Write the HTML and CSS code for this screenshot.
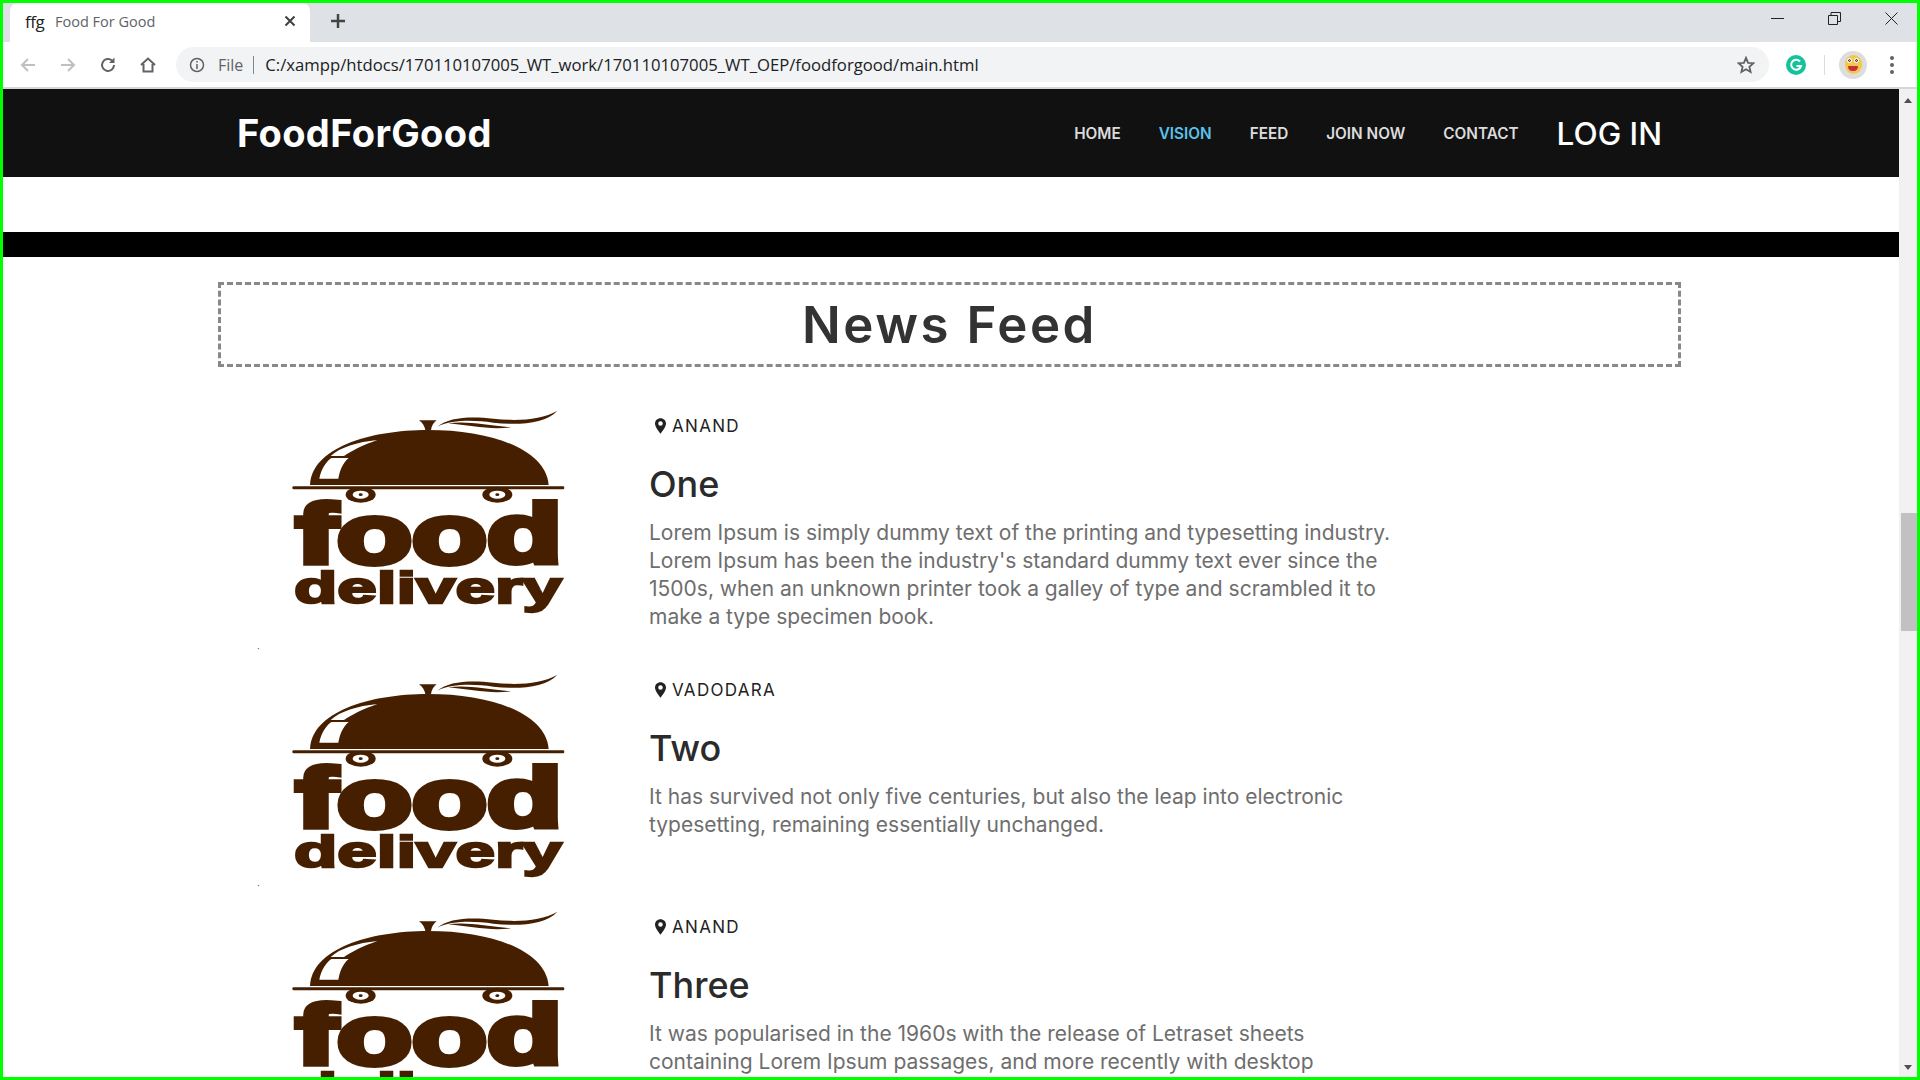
FILE: index.html
```html
<!DOCTYPE html>
<html lang="en">
<head>
<meta charset="utf-8">
<title>Food For Good</title>
<link rel="stylesheet" href="styles.css">
</head>
<body>
<svg class="defs" width="0" height="0" aria-hidden="true">
  <symbol id="cloche" viewBox="0 0 1080 678">
    <path class="ink" d="M210 285C214 175 385 120 565 120C755 120 917 178 926 285Z"/>
    <path class="paper" d="M238 266C243 238 258 215 274 204L326 204C307 220 299 244 295 266Z"/>
    <path class="paper" d="M272 198C300 172 352 156 412 150C370 165 335 182 312 198Z"/>
    <path class="ink" d="M537 91L590 91C580 99 575 108 573 120L556 120C553 108 548 99 537 91Z"/>
    <rect class="ink" x="157" y="289" width="816" height="9" rx="4"/>
    <path class="ink" d="M592 110C625 82 690 78 760 86C830 94 905 90 952 62C915 102 835 106 760 98C700 90 640 88 592 110Z"/>
    <path class="ink" d="M625 100C680 92 740 106 812 112C750 120 690 106 625 100Z"/>
    <ellipse class="ink" cx="362" cy="314" rx="45" ry="24"/>
    <ellipse class="paper" cx="362" cy="314" rx="24" ry="12"/>
    <ellipse class="ink" cx="362" cy="314" rx="6" ry="4"/>
    <ellipse class="ink" cx="772" cy="314" rx="45" ry="24"/>
    <ellipse class="paper" cx="772" cy="314" rx="24" ry="12"/>
    <ellipse class="ink" cx="772" cy="314" rx="6" ry="4"/>
  </symbol>
  <symbol id="pin" viewBox="0 0 14 20">
    <path fill-rule="evenodd" d="M7 0C3 0 0 3 0 6.8C0 11 4.6 16.500 7 20C9.400 16.500 14 11 14 6.800C14 3 11 0 7 0ZM7 4A2.900 2.900 0 1 1 7 9.800A2.900 2.900 0 1 1 7 4Z"/>
  </symbol>
</svg>
<div class="frame">
  <header class="chrome">
    <div class="tabstrip">
      <div class="tab">
        <span class="favicon">ffg</span>
        <span class="tab-title">Food For Good</span>
        <svg class="tab-close" width="12" height="12" viewBox="0 0 12 12"><path d="M1.500 1.500L10.500 10.500M10.500 1.500L1.500 10.500"/></svg>
      </div>
      <svg class="new-tab" width="16" height="16" viewBox="0 0 16 16"><path d="M8 1V15M1 8H15"/></svg>
      <div class="win-controls">
        <svg width="13" height="13" viewBox="0 0 13 13"><path d="M0 6.500H13"/></svg>
        <svg width="13" height="13" viewBox="0 0 13 13"><path d="M.5 3.500H9.500V12.500H.5ZM3 3.500V.5H12.500V9.500H9.500"/></svg>
        <svg width="13" height="13" viewBox="0 0 13 13"><path d="M.5 .5L12.500 12.500M12.500 .5L.5 12.500"/></svg>
      </div>
    </div>
    <div class="toolbar">
      <div class="nav-btns">
        <svg class="btn-off" width="18" height="18" viewBox="0 0 18 18"><path d="M16 9H3M9 3L3 9L9 15"/></svg>
        <svg class="btn-off" width="18" height="18" viewBox="0 0 18 18"><path d="M2 9H15M9 3L15 9L9 15"/></svg>
        <svg class="btn-on" width="18" height="18" viewBox="0 0 18 18"><path d="M15 9A6 6 0 1 1 13 4.500"/><path class="solid" d="M15.500 1.500V7H10Z"/></svg>
        <svg class="btn-on" width="18" height="18" viewBox="0 0 18 18"><path d="M2 9L9 2.500L16 9M4.500 8V15.500H13.500V8"/></svg>
      </div>
      <div class="omnibox">
        <svg class="info" width="16" height="16" viewBox="0 0 16 16"><circle cx="8" cy="8" r="6.500"/><path d="M8 7V12M8 4V5.600"/></svg>
        <span class="scheme">File</span>
        <span class="sep"></span>
        <span class="url">C:/xampp/htdocs/170110107005_WT_work/170110107005_WT_OEP/foodforgood/main.html</span>
        <svg class="star" width="18" height="18" viewBox="0 0 18 18"><path d="M9 1.800L11.100 6.800L16.400 7.200L12.400 10.700L13.600 16L9 13.200L4.400 16L5.600 10.700L1.600 7.200L6.900 6.800Z"/></svg>
      </div>
      <div class="ext">
        <span class="grammarly"><svg width="20" height="20" viewBox="0 0 20 20"><path d="M14 6.500A5 5 0 1 0 15 11H10.500"/></svg></span>
        <span class="ext-sep"></span>
        <span class="avatar"><span class="face"><span class="eyes"><i></i><i></i></span><span class="mouth"></span></span></span>
        <span class="dots"><i></i><i></i><i></i></span>
      </div>
    </div>
  </header>

  <div class="viewport">
    <main class="page">
      <nav class="navbar">
        <a class="brand">FoodForGood</a>
        <div class="menu">
          <a>HOME</a>
          <a class="active">VISION</a>
          <a>FEED</a>
          <a>JOIN NOW</a>
          <a>CONTACT</a>
          <a class="login">LOG IN</a>
        </div>
      </nav>
      <div class="blackbar"></div>
      <h1 class="feed-title">News Feed</h1>
      <section class="feed">
        <article class="item">
          <svg class="logo" viewBox="0 0 360 226"><use href="#cloche" width="360" height="226"/><text class="logo-big" x="56" y="173" textLength="266" lengthAdjust="spacingAndGlyphs">food</text><text class="logo-small" x="54" y="213" textLength="268" lengthAdjust="spacingAndGlyphs">delivery</text></svg>
          <div class="body">
            <div class="place"><svg class="pin"><use href="#pin"/></svg>ANAND</div>
            <h2>One</h2>
            <p>Lorem Ipsum is simply dummy text of the printing and typesetting industry.<br>Lorem Ipsum has been the industry's standard dummy text ever since the<br>1500s, when an unknown printer took a galley of type and scrambled it to<br>make a type specimen book.</p>
          </div>
        </article>
        <div class="tick">`</div>
        <article class="item">
          <svg class="logo" viewBox="0 0 360 226"><use href="#cloche" width="360" height="226"/><text class="logo-big" x="56" y="173" textLength="266" lengthAdjust="spacingAndGlyphs">food</text><text class="logo-small" x="54" y="213" textLength="268" lengthAdjust="spacingAndGlyphs">delivery</text></svg>
          <div class="body">
            <div class="place"><svg class="pin"><use href="#pin"/></svg>VADODARA</div>
            <h2>Two</h2>
            <p>It has survived not only five centuries, but also the leap into electronic<br>typesetting, remaining essentially unchanged.</p>
          </div>
        </article>
        <div class="tick">`</div>
        <article class="item">
          <svg class="logo" viewBox="0 0 360 226"><use href="#cloche" width="360" height="226"/><text class="logo-big" x="56" y="173" textLength="266" lengthAdjust="spacingAndGlyphs">food</text><text class="logo-small" x="54" y="213" textLength="268" lengthAdjust="spacingAndGlyphs">delivery</text></svg>
          <div class="body">
            <div class="place"><svg class="pin"><use href="#pin"/></svg>ANAND</div>
            <h2>Three</h2>
            <p>It was popularised in the 1960s with the release of Letraset sheets<br>containing Lorem Ipsum passages, and more recently with desktop</p>
          </div>
        </article>
      </section>
    </main>
    <aside class="scrollbar">
      <span class="arrow-up"></span>
      <span class="thumb"></span>
      <span class="arrow-down"></span>
    </aside>
  </div>
</div>
</body>
</html>
```

FILE: styles.css
```css
* { box-sizing: border-box; }
html, body { margin: 0; height: 100%; overflow: hidden; background: #fff; }
body { font-family: "Inter", "Liberation Sans", sans-serif; }
.defs { position: absolute; }
.frame { width: 1920px; height: 1080px; border: 3px solid #00ff00; display: flex; flex-direction: column; overflow: hidden; }

.chrome { flex: none; font-family: "Open Sans", "Noto Sans", sans-serif; }
.tabstrip { height: 39px; background: #dee1e6; display: flex; align-items: stretch; padding-left: 7px; }
.tab { width: 300px; background: #fff; border-radius: 8px 8px 0 0; display: flex; align-items: center; padding: 0 14px 3px 15px; }
.favicon { font-size: 17px; color: #222; width: 30px; letter-spacing: -.5px; }
.tab-title { font-size: 14.500px; color: #5f6368; flex: 1; }
.tab-close { fill: none; stroke: #3c4043; stroke-width: 2; }
.new-tab { fill: none; stroke: #444; stroke-width: 2.500; align-self: center; margin: 0 0 3px 20px; }
.win-controls { margin-left: auto; display: flex; align-items: center; gap: 44px; padding: 0 19px 8px 0; }
.win-controls svg { fill: none; stroke: #222; stroke-width: 1; }
.toolbar { height: 47px; background: #fff; border-bottom: 2px solid #d5d7db; display: flex; align-items: center; padding: 0 0 0 16px; }
.nav-btns { display: flex; gap: 22px; width: 157px; flex: none; }
.nav-btns svg { fill: none; stroke-width: 2; }
.btn-off { stroke: #bdc0c4; }
.btn-on { stroke: #5f6368; }
.solid { fill: #5f6368; stroke: none; }
.omnibox { width: 1593px; flex: none; height: 35px; background: #f1f3f4; border-radius: 18px; display: flex; align-items: center; padding: 0 14px 0 13px; }
.info { fill: none; stroke: #5f6368; stroke-width: 1.500; }
.scheme { font-size: 16px; color: #5f6368; margin-left: 13px; }
.sep { width: 1px; height: 18px; background: #80868b; margin: 0 11px 0 10px; }
.url { font-size: 16.700px; color: #202124; flex: 1; white-space: nowrap; }
.star { fill: none; stroke: #5f6368; stroke-width: 1.800; }
.ext { display: flex; align-items: center; margin-left: 17px; }
.grammarly { width: 20px; height: 20px; border-radius: 50%; background: #15c39a; display: block; }
.grammarly svg { display: block; fill: none; stroke: #fff; stroke-width: 2; }
.ext-sep { width: 1px; height: 20px; background: #dadce0; margin: 0 14px 0 18px; }
.avatar { width: 28px; height: 28px; border-radius: 50%; background: #ddd; display: flex; align-items: center; justify-content: center; }
.face { width: 17px; height: 19px; border-radius: 50%; background: #f4c64a; display: flex; flex-direction: column; align-items: center; justify-content: space-between; padding: 3px 0 3px; }
.eyes { display: flex; gap: 2px; }
.eyes i { width: 5px; height: 5px; border-radius: 50%; background: #fff; border: 1.500px solid #fff; box-shadow: inset 0 0 0 1px #333; }
.mouth { width: 10px; height: 5px; background: #c62f3b; border-radius: 1px 1px 5px 5px; }
.dots { display: flex; flex-direction: column; gap: 3px; margin-left: 23px; }
.dots i { display: block; width: 4px; height: 4px; border-radius: 50%; background: #5f6368; }

.viewport { flex: 1; min-height: 0; display: flex; }
.page { width: 1896px; flex: none; overflow: hidden; }
.scrollbar { flex: 1; background: #f1f1f1; position: relative; }
.arrow-up, .arrow-down { position: absolute; left: 5px; width: 0; height: 0; border-left: 4.500px solid transparent; border-right: 4.500px solid transparent; }
.arrow-up { top: 9px; border-bottom: 5px solid #505050; }
.arrow-down { bottom: 7px; border-top: 5px solid #505050; }
.thumb { position: absolute; top: 424px; left: 2px; right: 0; height: 118px; background: #c1c1c1; }

.navbar { height: 88px; background: #111; display: flex; align-items: center; justify-content: space-between; padding: 0 237px 0 234px; color: #fff; }
.brand { font-size: 38px; font-weight: 700; letter-spacing: .35px; }
.menu { display: flex; align-items: center; gap: 38px; font-size: 15.300px; font-weight: 600; color: #dcdcdc; }
.menu .active { color: #5cc1ea; }
.menu .login { font-size: 31.500px; color: #fff; font-weight: 500; }

.blackbar { height: 25px; margin-top: 55px; background: #000; }
.feed-title { width: 1463px; height: 85px; margin: 25px 0 0 215px; border: 3px dashed #888; display: flex; align-items: center; justify-content: center; font-size: 51px; font-weight: 600; letter-spacing: 2.500px; color: #333; }

.feed { margin: 23px 0 0 237px; }
.item { display: flex; align-items: flex-start; gap: 49px; }
.logo { width: 360px; height: 226px; flex: none; display: block; }
.ink { fill: #451f00; }
.paper { fill: #fff; }
.logo-big, .logo-small { fill: #451f00; stroke: #451f00; font-family: "Liberation Sans", sans-serif; font-weight: 700; }
.logo-big { font-size: 84px; stroke-width: 6; }
.logo-small { font-size: 44px; stroke-width: 2.300; }
.tick { height: 11px; padding-left: 17px; font-size: 9px; line-height: 11px; color: #333; position: relative; top: 3px; }

.body { width: 780px; padding: 26px 0 12px; }
.place { height: 20px; display: flex; align-items: center; font-size: 17px; font-weight: 400; letter-spacing: 1.300px; color: #222; padding-left: 6px; }
.pin { width: 11px; height: 16px; fill: #222; margin-right: 6px; }
.body h2 { margin: 26px 0 0; height: 44px; line-height: 44px; font-size: 36px; font-weight: 500; color: #2b2b2b; }
.body p { margin: 13px 0 0; font-size: 21px; line-height: 28px; color: #6e6e6e; }
```
